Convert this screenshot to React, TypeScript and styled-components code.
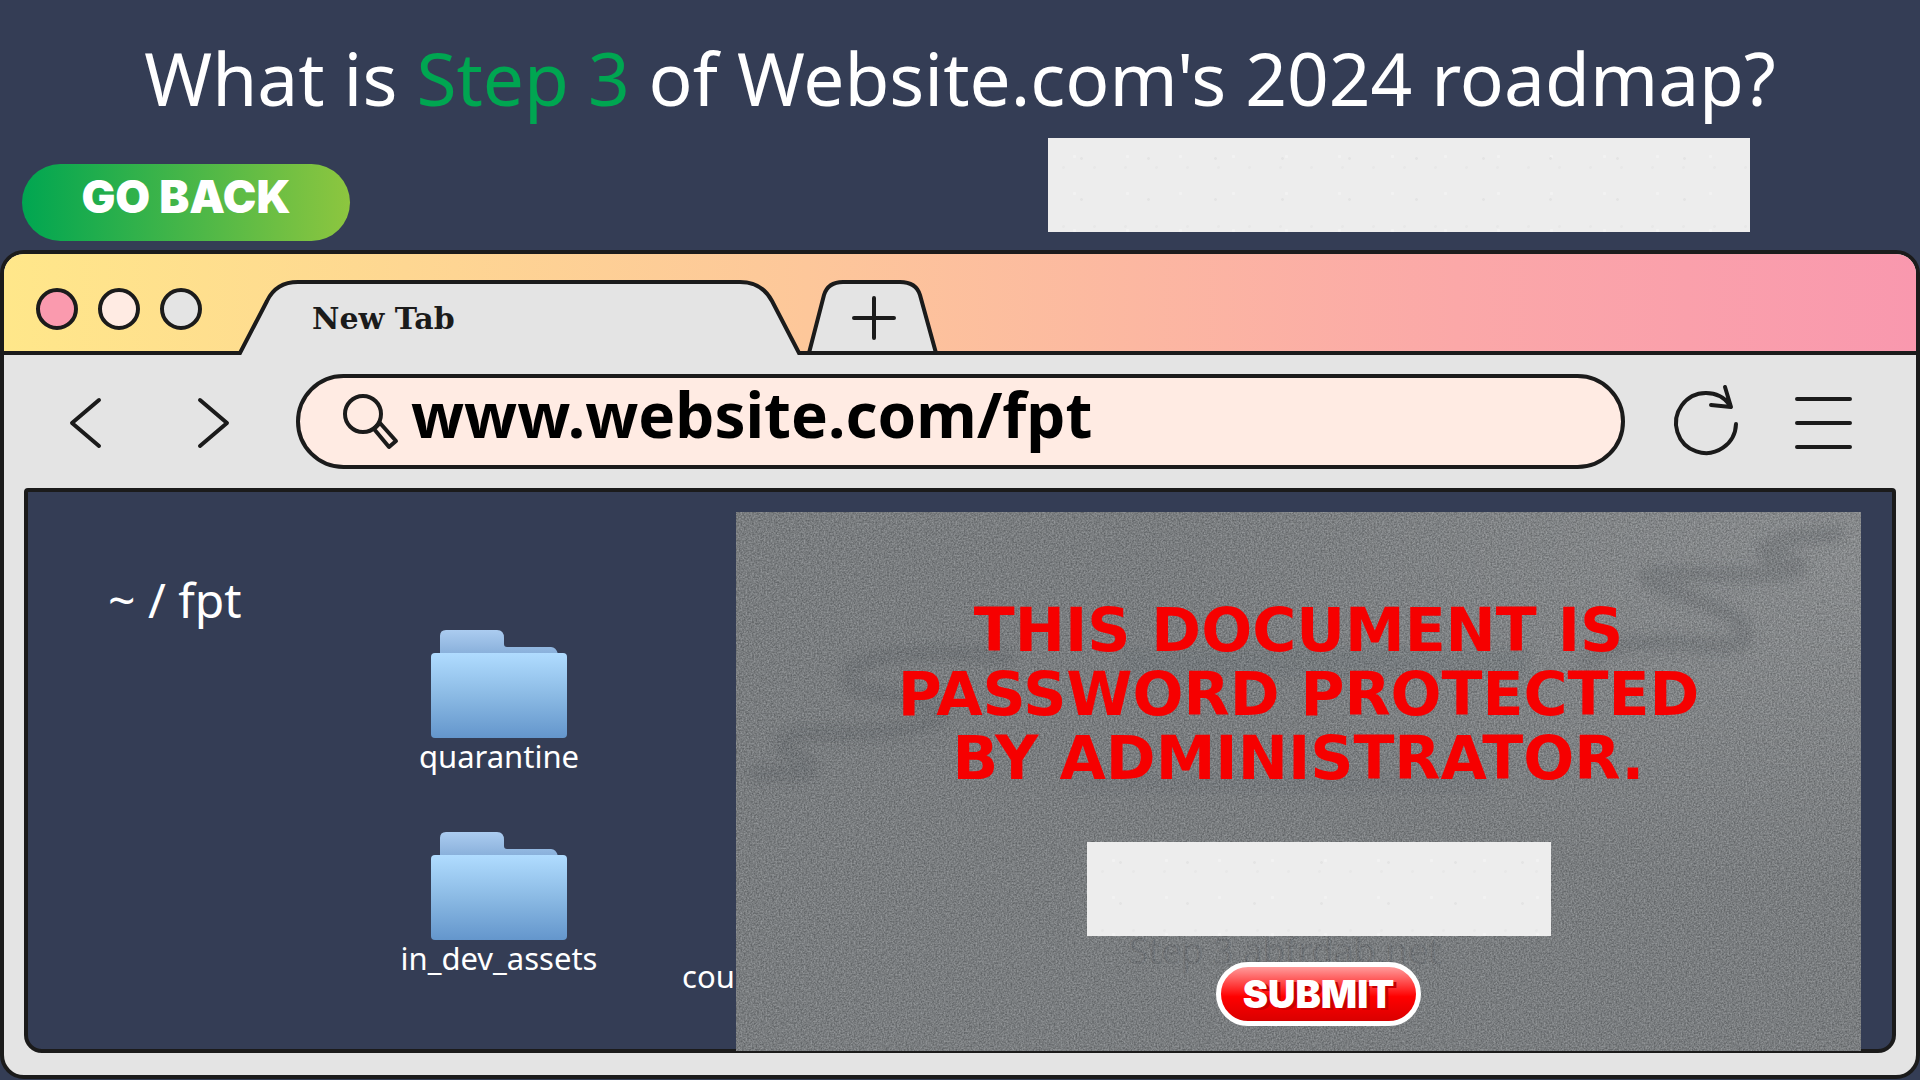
import React from "react";
import styled, { createGlobalStyle } from "styled-components";

const navy = "#343d55";
const ink = "#1b1b1b";
const chrome = "#e4e4e4";
const blush = "#ffebe3";
const sans = `"Noto Sans", "Open Sans", sans-serif`;

const GlobalStyle = createGlobalStyle`
  *, *::before, *::after { box-sizing: border-box; }
  body { margin: 0; background: ${navy}; font-family: ${sans}; }
  button { border: 0; padding: 0; background: none; font: inherit; cursor: pointer; }
`;

const Page = styled.div`
  display: flex;
  flex-direction: column;
  min-height: 100vh;
  padding-bottom: 1px;
`;

const Title = styled.h1`
  margin: 0;
  padding: 30px 0 2px;
  text-align: center;
  font-size: 73px;
  line-height: 96px;
  font-weight: 400;
  color: #fff;
`;

const Accent = styled.span`
  color: #00a651;
`;

const AnswerBar = styled.div`
  display: flex;
  justify-content: space-between;
  align-items: flex-start;
  padding: 10px 170px 9px 22px;
`;

const BackButton = styled.button`
  width: 328px;
  height: 77px;
  margin-top: 26px;
  padding-bottom: 12px;
  border-radius: 39px;
  background: linear-gradient(90deg, #00a651, #8dc63f);
  color: #fff;
  font: 900 45px/56px Inter, sans-serif;
`;

const PaperInput = styled.input<{ $width: number }>`
  width: ${(p) => p.$width}px;
  max-width: 100%;
  height: 94px;
  border: 0;
  border-radius: 0;
  padding: 0 24px;
  background-color: #ededed;
  background-image: radial-gradient(circle, #e4e4e4 1px, transparent 2px),
    radial-gradient(circle, #f2f2f2 1px, transparent 2px),
    radial-gradient(circle, #e8e8e8 1px, transparent 2px);
  background-size: 67px 41px, 53px 37px, 31px 59px;
  font: 400 40px ${sans};
`;

const Browser = styled.section`
  flex: 1;
  display: flex;
  flex-direction: column;
  border: 4px solid ${ink};
  border-radius: 24px;
  background: ${chrome};
  overflow: hidden;
`;

const TabStrip = styled.div`
  display: flex;
  align-items: flex-end;
  height: 101px;
  border-bottom: 4px solid ${ink};
  background: linear-gradient(90deg, #ffe78a, #fdc79a 42%, #fba8a8 76%, #f998ae);
`;

const Lights = styled.div`
  display: flex;
  gap: 20px;
  width: 232px;
  padding: 0 0 21px 32px;
`;

const Light = styled.button<{ $fill: string }>`
  width: 42px;
  height: 42px;
  border: 4px solid ${ink};
  border-radius: 50%;
  background: ${(p) => p.$fill};
`;

const Tab = styled.button`
  position: relative;
  flex: none;
  width: 566px;
  height: 75px;
  margin-bottom: -4px;
  padding: 2px 0 0 76px;
  text-align: left;
  color: ${ink};
  font: 700 30px/36px "DejaVu Serif", serif;
`;

const NewTab = styled.button`
  position: relative;
  flex: none;
  width: 140px;
  height: 72px;
`;

const TabShape = styled.svg`
  position: absolute;
  inset: 0;
`;

const TabLabel = styled.span`
  position: relative;
`;

const Toolbar = styled.div`
  display: flex;
  align-items: center;
  padding: 19px 62px 19px 52px;
`;

const IconButton = styled.button`
  flex: none;
  display: flex;
  width: 64px;
  height: 64px;
`;

const History = styled.div`
  display: flex;
  gap: 64px;
  width: 240px;
`;

const Address = styled.label`
  flex: 1;
  display: flex;
  align-items: center;
  gap: 4px;
  min-width: 0;
  height: 95px;
  margin-right: 49px;
  padding-left: 41px;
  border: 4px solid ${ink};
  border-radius: 48px;
  background: ${blush};
`;

const AddressInput = styled.input`
  flex: 1;
  min-width: 0;
  height: 87px;
  border: 0;
  padding: 0 32px 16px 6px;
  background: none;
  outline: none;
  color: #000;
  font: 700 62px/70px ${sans};
`;

const Actions = styled.div`
  display: flex;
  gap: 52px;
`;

const Viewport = styled.main`
  flex: 1;
  display: flex;
  margin: 0 20px 22px;
  padding: 20px 31px 0 80px;
  border: 4px solid ${ink};
  border-radius: 4px 4px 18px 18px;
  background: ${navy};
  color: #fff;
`;

const Path = styled.h2`
  flex: none;
  width: 272px;
  margin: 0;
  padding-top: 56px;
  font-size: 48px;
  line-height: 64px;
  font-weight: 400;
`;

const Folders = styled.div`
  flex: none;
  display: flex;
  flex-direction: column;
  gap: 20px;
  width: 240px;
  padding: 118px 2px 0 0;
`;

const Folder = styled.a`
  display: flex;
  flex-direction: column;
  align-items: center;
  height: 182px;
  color: #fff;
  text-decoration: none;
  font-size: 31px;
  line-height: 36px;
`;

const PartFile = styled.a`
  flex: 1;
  align-self: flex-end;
  min-width: 0;
  padding: 0 0 55px 62px;
  color: #fff;
  text-decoration: none;
  font-size: 31px;
  line-height: 36px;
`;

const Lock = styled.form`
  position: relative;
  flex: none;
  display: flex;
  flex-direction: column;
  align-items: center;
  width: 1125px;
  margin-bottom: -2px;
  padding-top: 86px;
  background: #787c7f;
  overflow: hidden;
`;

const Texture = styled.svg`
  position: absolute;
  inset: 0;
  width: 100%;
  height: 100%;
`;

const Warning = styled.p`
  position: relative;
  margin: 0 0 52px;
  text-align: center;
  color: #f60000;
  font: 700 60px/64px "DejaVu Sans", sans-serif;
  text-transform: uppercase;
`;

const Prompt = styled.div`
  position: relative;
  display: flex;
  flex-direction: column;
  align-items: center;
  gap: 26px;
  padding-left: 40px;
`;

const Submit = styled.button`
  width: 205px;
  height: 64px;
  border: 5px solid #fff;
  border-radius: 32px;
  background: linear-gradient(#ff9c9c, #ff0000 55%, #d90000);
  color: #fff;
  text-shadow: 3px 2px 0 #c80000;
  font: 900 38px/48px Inter, sans-serif;
`;

const stroke = { fill: "none", stroke: ink, strokeWidth: 4, strokeLinecap: "round", strokeLinejoin: "round" } as const;

const FolderIcon = () => (
  <svg width="136" height="108" viewBox="0 0 136 108" aria-hidden="true">
    <defs>
      <linearGradient id="flap" x1="0" y1="0" x2="0" y2="1">
        <stop offset="0" stopColor="#abccf0" />
        <stop offset="1" stopColor="#83abd7" />
      </linearGradient>
      <linearGradient id="front" x1="0" y1="0" x2="0" y2="1">
        <stop offset="0" stopColor="#b0dcff" />
        <stop offset="0.5" stopColor="#8bbae4" />
        <stop offset="1" stopColor="#6496cc" />
      </linearGradient>
    </defs>
    <path d="M9 26V6q0-6 6-6h51q7 0 7 8v6q0 3 3 3h44q5 0 7 7v4z" fill="url(#flap)" />
    <rect y="23" width="136" height="85" rx="4" fill="url(#front)" />
  </svg>
);

const folders = ["quarantine", "in_dev_assets"];

export default function App() {
  return (
    <Page>
      <GlobalStyle />
      <Title>
        What is <Accent>Step 3</Accent> of Website.com's 2024 roadmap?
      </Title>
      <AnswerBar>
        <BackButton type="button">GO BACK</BackButton>
        <PaperInput $width={702} aria-label="Answer" />
      </AnswerBar>
      <Browser>
        <TabStrip>
          <Lights>
            <Light type="button" aria-label="Close" $fill="#fa9aae" />
            <Light type="button" aria-label="Minimize" $fill={blush} />
            <Light type="button" aria-label="Maximize" $fill={chrome} />
          </Lights>
          <Tab type="button">
            <TabShape width="566" height="75" viewBox="0 0 566 75" aria-hidden="true">
              <path d="M4 75L31 21Q40 2 62 2H504Q526 2 536 21L563 75z" fill={chrome} />
              <path d="M0 73H4L31 21Q40 2 62 2H504Q526 2 536 21L563 73H566" fill="none" stroke={ink} strokeWidth="4" />
            </TabShape>
            <TabLabel>New Tab</TabLabel>
          </Tab>
          <NewTab type="button" aria-label="Open a new tab">
            <TabShape width="140" height="72" viewBox="0 0 140 72" aria-hidden="true">
              <path d="M7 74L22 16Q26 3 41 3H98Q114 3 118 16L134 74" fill={chrome} stroke={ink} strokeWidth="4" />
              <path d="M72 19V59M52 39H92" {...stroke} />
            </TabShape>
          </NewTab>
        </TabStrip>
        <Toolbar>
          <History>
            <IconButton type="button" aria-label="Back">
              <svg width="64" height="64" aria-hidden="true"><path d="M43 10L16 33L43 56" {...stroke} /></svg>
            </IconButton>
            <IconButton type="button" aria-label="Forward">
              <svg width="64" height="64" aria-hidden="true"><path d="M16 10L43 33L16 56" {...stroke} /></svg>
            </IconButton>
          </History>
          <Address>
            <svg width="60" height="60" viewBox="0 0 60 60" aria-label="Search">
              <circle cx="22" cy="22" r="18" {...stroke} />
              <path d="M33 37L39 31L55 49L48 55z" {...stroke} />
            </svg>
            <AddressInput aria-label="Address" defaultValue="www.website.com/fpt" />
          </Address>
          <Actions>
            <IconButton type="button" aria-label="Reload">
              <svg width="64" height="72" viewBox="0 0 64 72" overflow="visible" aria-hidden="true">
                <path d="M62 34A30 30 0 1 1 56 15M51 -3L57 17L37 15" {...stroke} />
              </svg>
            </IconButton>
            <IconButton type="button" aria-label="Menu">
              <svg width="64" height="64" aria-hidden="true"><path d="M7 9H60M7 33H60M7 57H60" {...stroke} /></svg>
            </IconButton>
          </Actions>
        </Toolbar>
        <Viewport>
          <Path>~ / fpt</Path>
          <Folders>
            {folders.map((name) => (
              <Folder href="#" key={name}>
                <FolderIcon />
                {name}
              </Folder>
            ))}
          </Folders>
          <PartFile href="#">cou</PartFile>
          <Lock>
            <Texture aria-hidden="true" viewBox="0 0 1125 540" preserveAspectRatio="none">
              <defs>
                <filter id="grain" x="0" y="0" width="100%" height="100%" colorInterpolationFilters="sRGB">
                  <feTurbulence type="fractalNoise" baseFrequency="0.6" numOctaves="2" seed="4" />
                  <feColorMatrix values="1.6 0 0 0 -0.3  1.6 0 0 0 -0.3  1.6 0 0 0 -0.3  0 0 0 0 0.2" />
                </filter>
                <filter id="soft"><feGaussianBlur stdDeviation="4" /></filter>
                <radialGradient id="glow" cx="1" cy="0.1" r="0.6">
                  <stop offset="0" stopColor="#fff" stopOpacity="0.13" />
                  <stop offset="1" stopColor="#fff" stopOpacity="0" />
                </radialGradient>
              </defs>
              <rect width="1125" height="540" fill="url(#glow)" />
              <g fill="none" stroke="#565a5f" strokeOpacity="0.3" strokeWidth="17" strokeLinecap="round" filter="url(#soft)">
                <path d="M1100 22C1030 25 1000 45 1060 50C1085 70 960 60 915 62C890 75 1010 90 1010 125C1000 150 900 110 850 150" />
                <path d="M270 145C170 135 90 145 120 178C260 195 220 225 60 222C20 240 90 250 70 262L20 262" />
              </g>
              <rect x="385" y="136" width="410" height="30" fill="#5f6670" fillOpacity="0.25" filter="url(#soft)" />
              <rect x="335" y="262" width="420" height="20" fill="#5f6670" fillOpacity="0.18" filter="url(#soft)" />
              <text x="392" y="453" fontSize="36" fontFamily="Noto Sans, sans-serif" fill="#55595d" fillOpacity="0.35">
                Step 3 abfrdab.net
              </text>
              <rect width="1125" height="540" filter="url(#grain)" />
            </Texture>
            <Warning>
              This document is
              <br />
              password protected
              <br />
              by administrator.
            </Warning>
            <Prompt>
              <PaperInput $width={464} type="password" aria-label="Password" />
              <Submit type="button">SUBMIT</Submit>
            </Prompt>
          </Lock>
        </Viewport>
      </Browser>
    </Page>
  );
}
